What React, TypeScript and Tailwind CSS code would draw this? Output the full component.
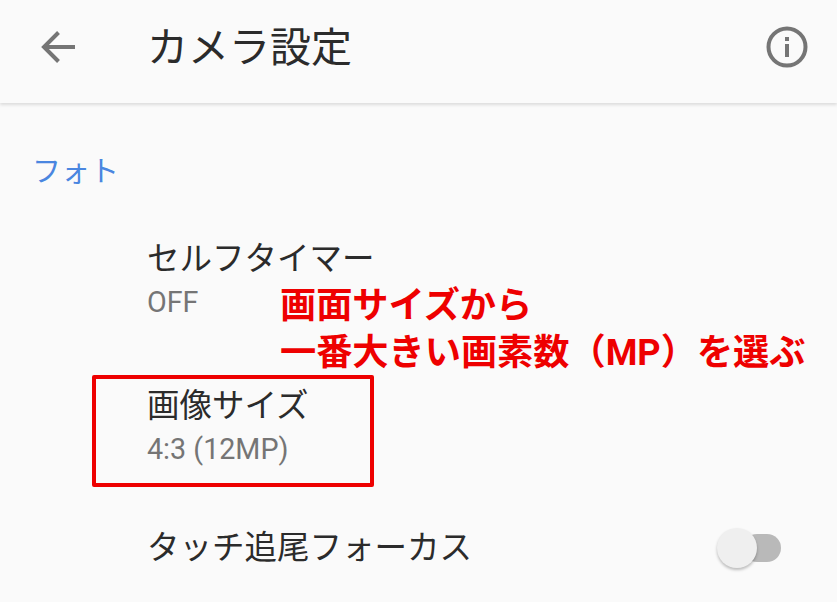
import React from 'react';

const JP = "font-['Roboto','Noto_Sans_CJK_JP',sans-serif]";

function Row({ title, sub }: { title: string; sub: string }) {
  return (
    <div className="pl-[147px]">
      <div className="h-[44px] text-[32.5px] leading-[44px] text-[#2b2b2b]">{title}</div>
      <div className="h-[42px] text-[28.700px] leading-[42px] text-[#757575]">{sub}</div>
    </div>
  );
}

export default function App() {
  return (
    <div className={`relative h-[602px] w-[837px] overflow-hidden bg-[#fafafa] ${JP}`}>
      {/* ヘッダー */}
      <header className="flex h-[103px] items-center justify-between bg-[#fafafa] pl-[40px] pr-[29px] shadow-[0_2px_3px_rgba(0,0,0,0.12)]">
        <div className="flex items-center">
          <svg width="36" height="36" viewBox="0 0 36 36" fill="none" stroke="#757575" strokeWidth="4" className="mb-[10px]">
            <path d="M35 18H4M18.500 3.500L4 18l14.500 14.500" />
          </svg>
          <h1 className="mb-[8px] ml-[71px] text-[41px] leading-[56px] font-normal text-[#2b2b2b]">カメラ設定</h1>
        </div>
        <svg width="42" height="42" viewBox="0 0 42 42" fill="none" className="mb-[10px]">
          <circle cx="21" cy="21" r="18.500" stroke="#757575" strokeWidth="4" />
          <rect x="19" y="18" width="4" height="13" fill="#757575" />
          <rect x="19" y="11" width="4" height="4" fill="#757575" />
        </svg>
      </header>

      <div className="pl-[32px] pt-[49px] text-[29px] leading-[40px] text-[#4a86e0]">フォト</div>

      <div className="mt-[45px]">
        <Row title="セルフタイマー" sub="OFF" />
      </div>
      <div className="mt-[61px]">
        <Row title="画像サイズ" sub="4:3 (12MP)" />
      </div>

      <div className="mt-[56px] flex items-center justify-between pl-[147px] pr-[56px]">
        <div className="h-[44px] text-[32.5px] leading-[44px] text-[#2b2b2b]">タッチ追尾フォーカス</div>
        <div className="relative h-[28px] w-[46px]">
          <div className="ml-[8px] h-[28px] w-[38px] rounded-full bg-[#b9b9b9]" />
          <div className="absolute -left-[18px] -top-[6px] h-[40px] w-[40px] rounded-full bg-[#efefef] shadow-[0_2px_3px_rgba(0,0,0,0.25)]" />
        </div>
      </div>

      {/* 赤い注釈 */}
      <div className="absolute left-[92px] top-[375px] h-[112px] w-[282px] rounded-[2px] border-[4px] border-[#ee0000]" />
      <div className="absolute left-[280px] top-[283px] text-[36.200px] leading-[46px] font-bold whitespace-nowrap text-[#ee0000]">
        <div className="h-[46px]">画面サイズから</div>
        <div className="h-[46px] mt-[1px]">一番大きい画素数（MP）を選ぶ</div>
      </div>
    </div>
  );
}
